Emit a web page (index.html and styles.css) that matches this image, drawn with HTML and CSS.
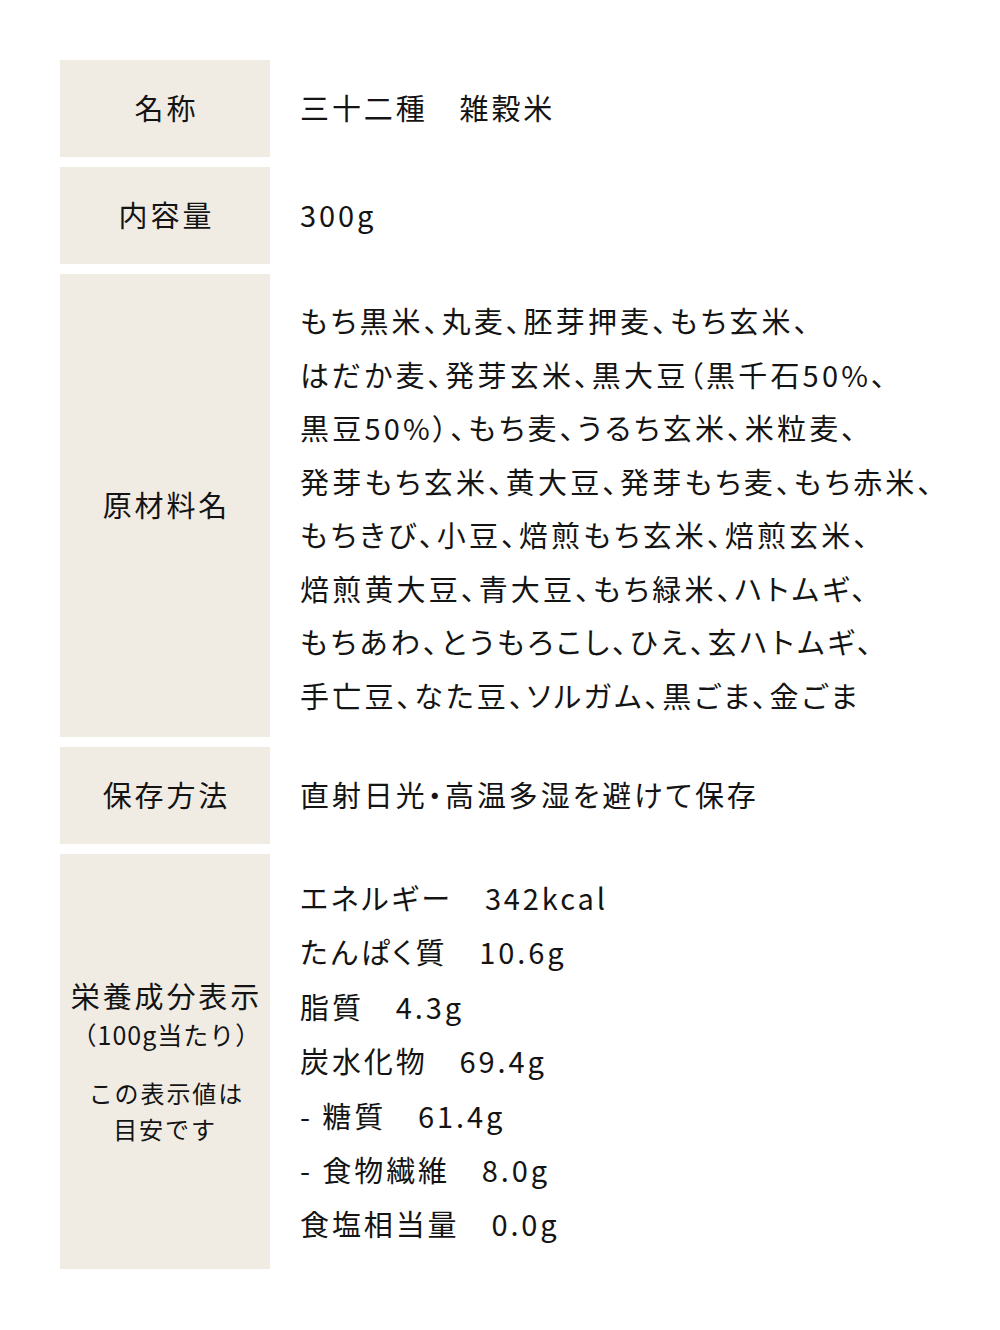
FILE: index.html
```html
<!DOCTYPE html>
<html lang="ja">
<head>
<meta charset="utf-8">
<link rel="stylesheet" href="styles.css">
</head>
<body>
<div class="spec">
  <div class="row">
    <div class="label">名称</div>
    <div class="value">三十二種　雑穀米</div>
  </div>
  <div class="row">
    <div class="label">内容量</div>
    <div class="value">300g</div>
  </div>
  <div class="row">
    <div class="label">原材料名</div>
    <div class="value value-ingredients">もち黒米、丸麦、胚芽押麦、もち玄米、<br>はだか麦、発芽玄米、黒大豆（黒千石50%、<br>黒豆50%）、もち麦、うるち玄米、米粒麦、<br>発芽もち玄米、黄大豆、発芽もち麦、もち赤米、<br>もちきび、小豆、焙煎もち玄米、焙煎玄米、<br>焙煎黄大豆、青大豆、もち緑米、ハトムギ、<br>もちあわ、とうもろこし、ひえ、玄ハトムギ、<br>手亡豆、なた豆、ソルガム、黒ごま、金ごま</div>
  </div>
  <div class="row">
    <div class="label">保存方法</div>
    <div class="value">直射日光・高温多湿を避けて保存</div>
  </div>
  <div class="row">
    <div class="label label-multi">
      <span class="label-main">栄養成分表示</span>
      <span class="label-sub">（100g当たり）</span>
      <span class="label-note">この表示値は<br>目安です</span>
    </div>
    <div class="value value-nutrition">エネルギー　342kcal<br>たんぱく質　10.6g<br>脂質　4.3g<br>炭水化物　69.4g<br>- 糖質　61.4g<br>- 食物繊維　8.0g<br>食塩相当量　0.0g</div>
  </div>
</div>
</body>
</html>
```
FILE: styles.css
```css
html, body {
  margin: 0;
  padding: 0;
  background: #ffffff;
}
body {
  font-family: "Noto Sans CJK JP", "Noto Sans", sans-serif;
  color: #141414;
}
.spec {
  padding: 60px 60px 0 60px;
  display: flex;
  flex-direction: column;
  gap: 10px;
}
.row {
  display: flex;
  min-height: 97px;
}
.label {
  flex: 0 0 210px;
  background: #f0ece4;
  display: flex;
  align-items: center;
  justify-content: center;
  padding-bottom: 4px;
  box-sizing: border-box;
  font-size: 29px;
  letter-spacing: 0.1em;
  text-indent: 0.1em;
}
.value {
  flex: 1;
  padding: 14px 0 18px 30px;
  display: flex;
  align-items: center;
  font-size: 29px;
  line-height: 54px;
  letter-spacing: 0.1em;
  font-feature-settings: "palt";
  white-space: nowrap;
}
.value-ingredients {
  padding: 20px 0 15px 30px;
  line-height: 53.5px;
  letter-spacing: 0.11em;
}
.value-nutrition {
  padding: 16px 0 18px 30px;
  line-height: 54.4px;
}
.label-multi {
  flex-direction: column;
  text-align: center;
  padding-bottom: 0;
}
.label-main {
  font-size: 29px;
  line-height: 40px;
}
.label-sub {
  font-size: 25px;
  line-height: 38px;
  letter-spacing: 0.04em;
}
.label-note {
  font-size: 24px;
  line-height: 36px;
  margin-top: 22px;
  letter-spacing: 0.08em;
}
```
